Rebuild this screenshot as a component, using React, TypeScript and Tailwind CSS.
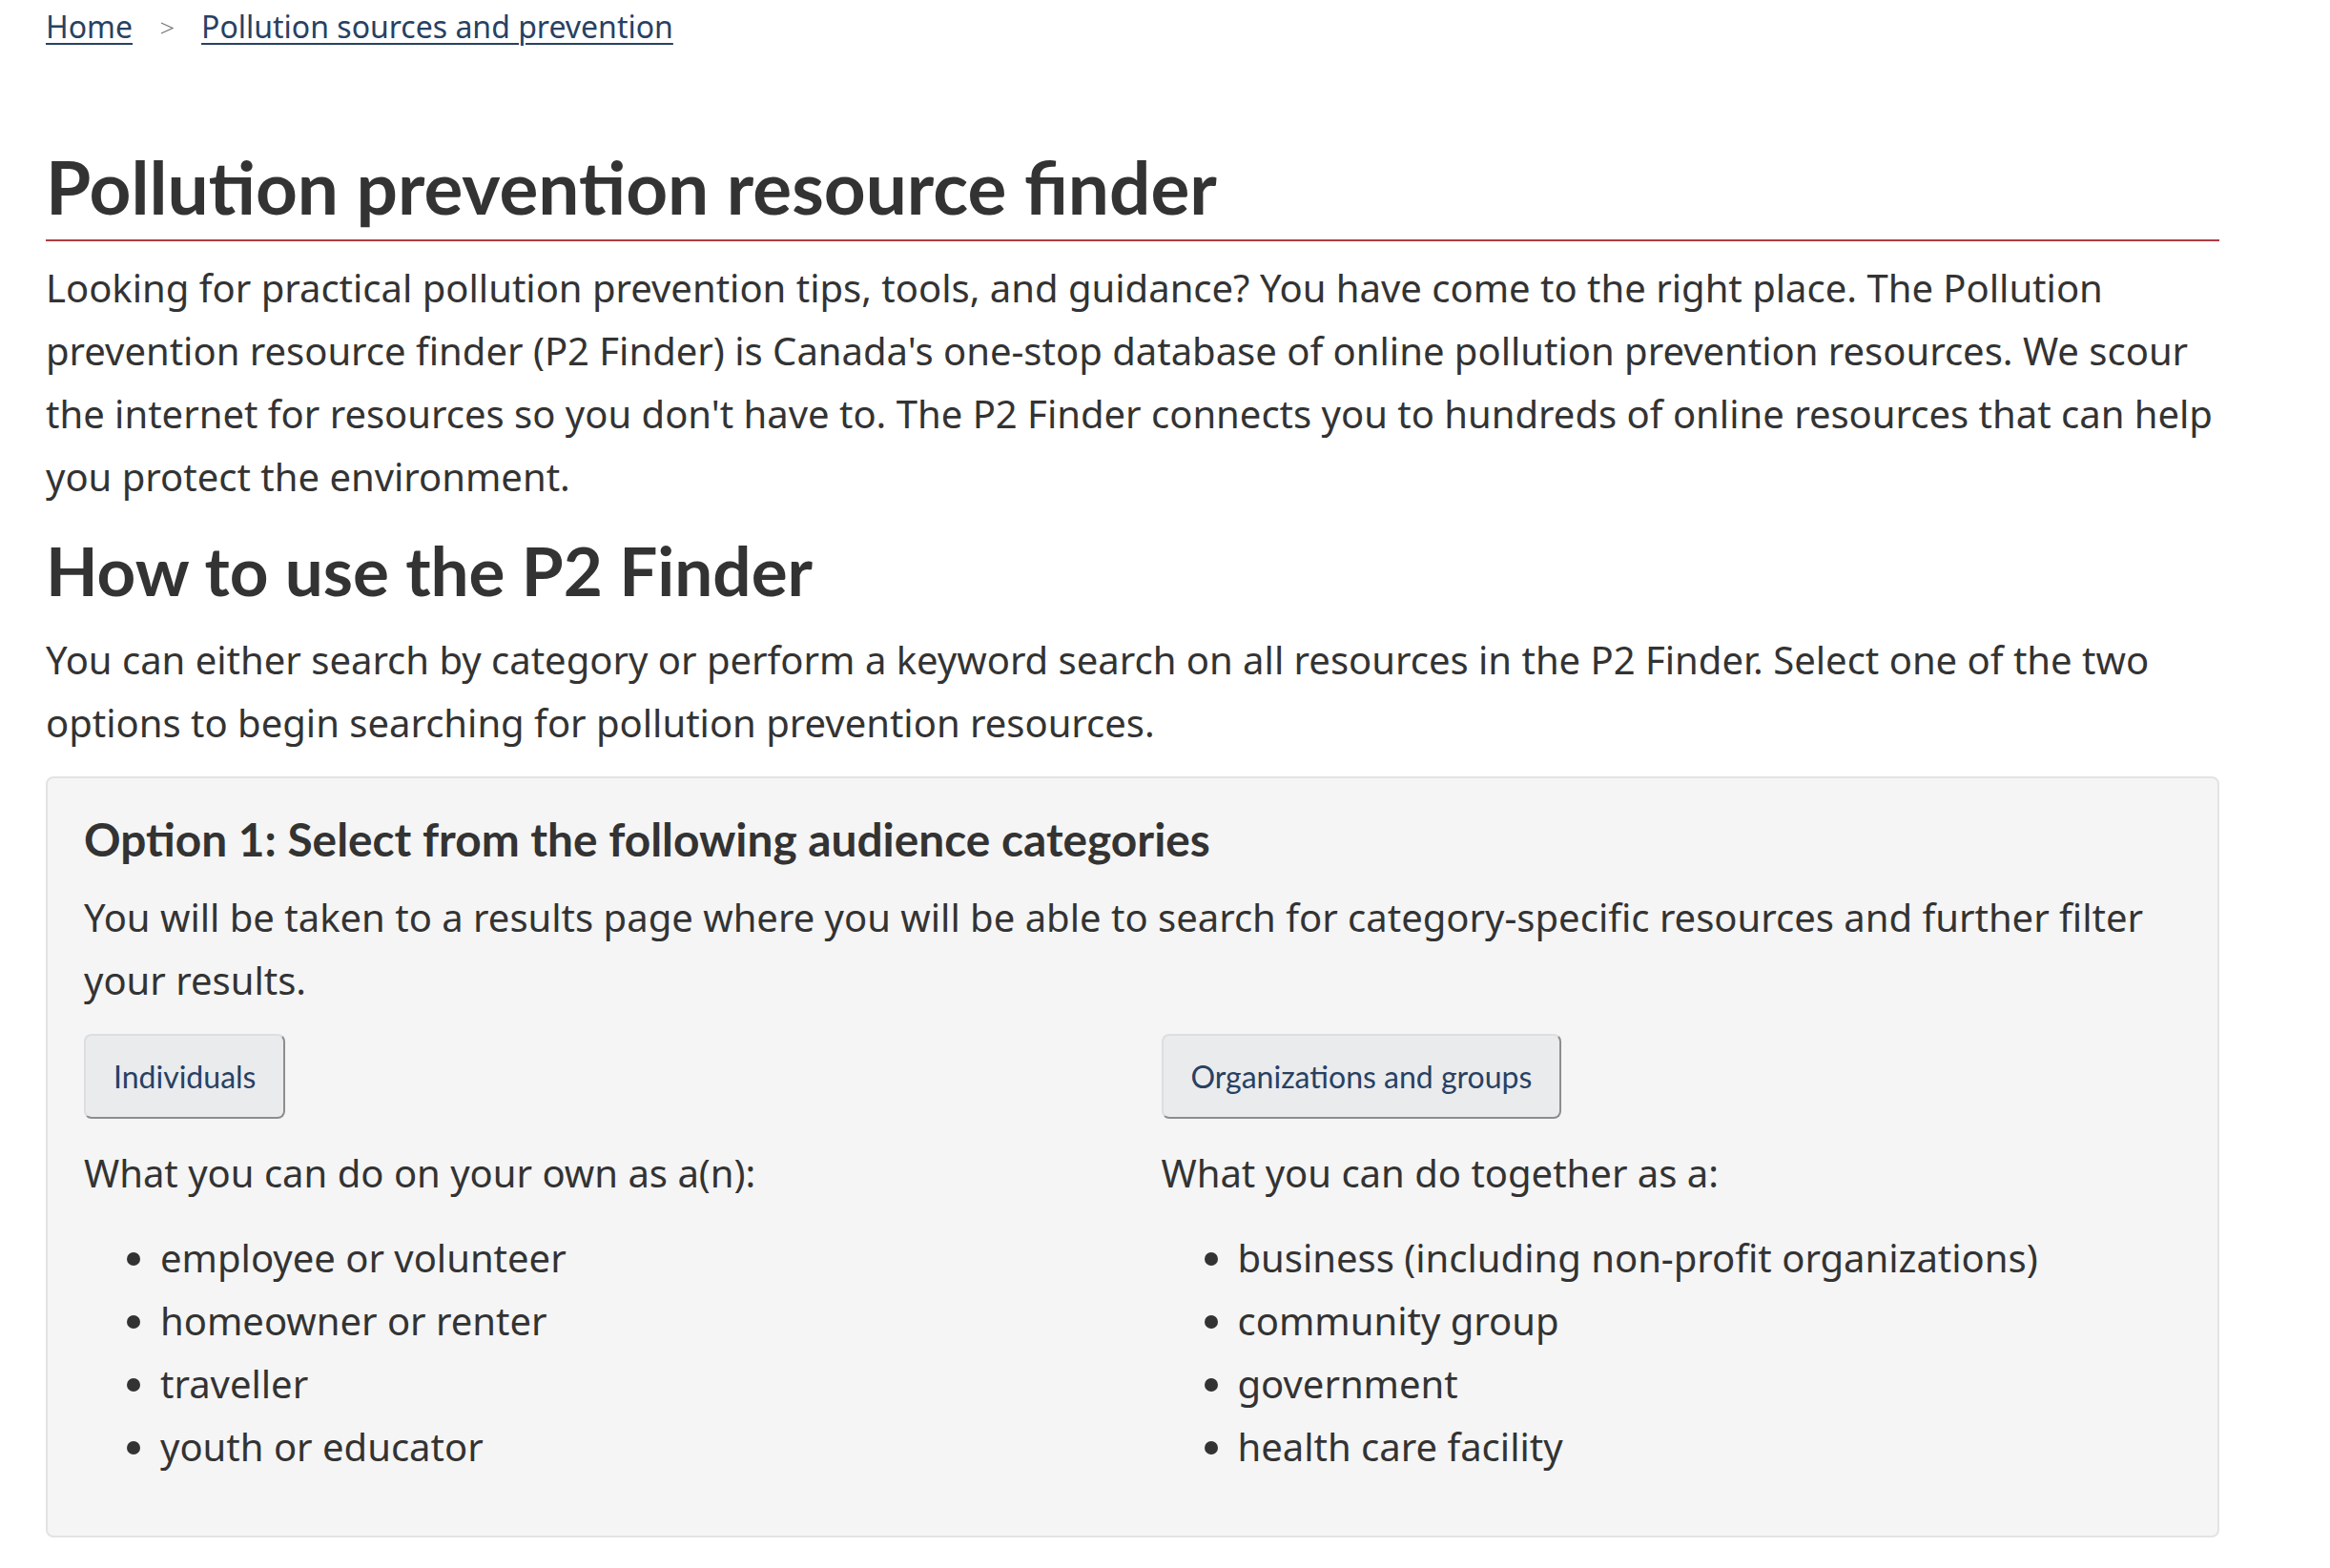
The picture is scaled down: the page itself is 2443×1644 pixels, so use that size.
import React from "react";

const individuals = [
  "employee or volunteer",
  "homeowner or renter",
  "traveller",
  "youth or educator",
];

const organizations = [
  "business (including non-profit organizations)",
  "community group",
  "government",
  "health care facility",
];

type ColumnProps = {
  label: string;
  intro: string;
  items: string[];
};

function AudienceColumn({ label, intro, items }: ColumnProps) {
  return (
    <div className="flex flex-col items-start">
      <a
        href="#"
        className="inline-flex h-[89px] items-center rounded-[8px] border-2 border-[#dcdee1] border-r-[#8d8d8d] border-b-[#8d8d8d] bg-[#eaebed] px-[29px] font-['Lato',sans-serif] text-[32px] text-[#284162]">
        {label}
      </a>
      <p className="mt-[24px]">{intro}</p>
      <ul className="mt-[23px] mb-[22px] list-disc pl-[80px]">
        {items.map((item) => (
          <li key={item}>{item}</li>
        ))}
      </ul>
    </div>
  );
}

export default function App() {
  return (
    <div className="min-h-screen bg-white font-['Noto_Sans',sans-serif] text-[40px] leading-[66px] text-[#333]">
      <div className="ml-[48px] w-[2279px] pb-[32px]">
        {/* breadcrumb */}
        <nav className="flex items-center pt-[8px] text-[32px] leading-[40px]">
          <a href="#" className="text-[#284162] underline decoration-2 underline-offset-[5px]">
            Home
          </a>
          <svg
            className="mx-[29px] mt-[3px]"
            width="14"
            height="13"
            viewBox="0 0 14 13"
            fill="none">
            <polyline points="1,1 13,6.5 1,12" stroke="#777" strokeWidth="1.3" />
          </svg>
          <a href="#" className="text-[#284162] underline decoration-2 underline-offset-[5px]">
            Pollution sources and prevention
          </a>
        </nav>

        <h1 className="mt-[104px] border-b-2 border-[#af3c43] pb-[13px] font-['Lato',sans-serif] text-[76.5px] leading-[86px] font-bold text-[#333]">
          Pollution prevention resource finder
        </h1>
        <p className="mt-[16px]">
          Looking for practical pollution prevention tips, tools, and guidance? You have come to
          the right place. The Pollution prevention resource finder (P2 Finder) is Canada's
          one-stop database of online pollution prevention resources. We scour the internet for
          resources so you don't have to. The P2 Finder connects you to hundreds of online
          resources that can help you protect the environment.
        </p>

        <h2 className="mt-[24px] font-['Lato',sans-serif] text-[71px] leading-[81px] font-bold text-[#333]">
          How to use the P2 Finder
        </h2>
        <p className="mt-[21px]">
          You can either search by category or perform a keyword search on all resources in the
          P2 Finder. Select one of the two options to begin searching for pollution prevention
          resources.
        </p>

        <section className="mt-[23px] rounded-[8px] border-2 border-[#e3e3e3] bg-[#f5f5f5] px-[38px] pt-[38px] pb-[38px]">
          <h3 className="font-['Lato',sans-serif] text-[47.8px] leading-[51px] font-bold text-[#333]">
            Option 1: Select from the following audience categories
          </h3>
          <p className="mt-[24px]">
            You will be taken to a results page where you will be able to search for
            category-specific resources and further filter your results.
          </p>
          <div className="mt-[23px] grid grid-cols-2 gap-x-[60px]">
            <AudienceColumn
              label="Individuals"
              intro="What you can do on your own as a(n):"
              items={individuals}
            />
            <AudienceColumn
              label="Organizations and groups"
              intro="What you can do together as a:"
              items={organizations}
            />
          </div>
        </section>
      </div>
    </div>
  );
}
